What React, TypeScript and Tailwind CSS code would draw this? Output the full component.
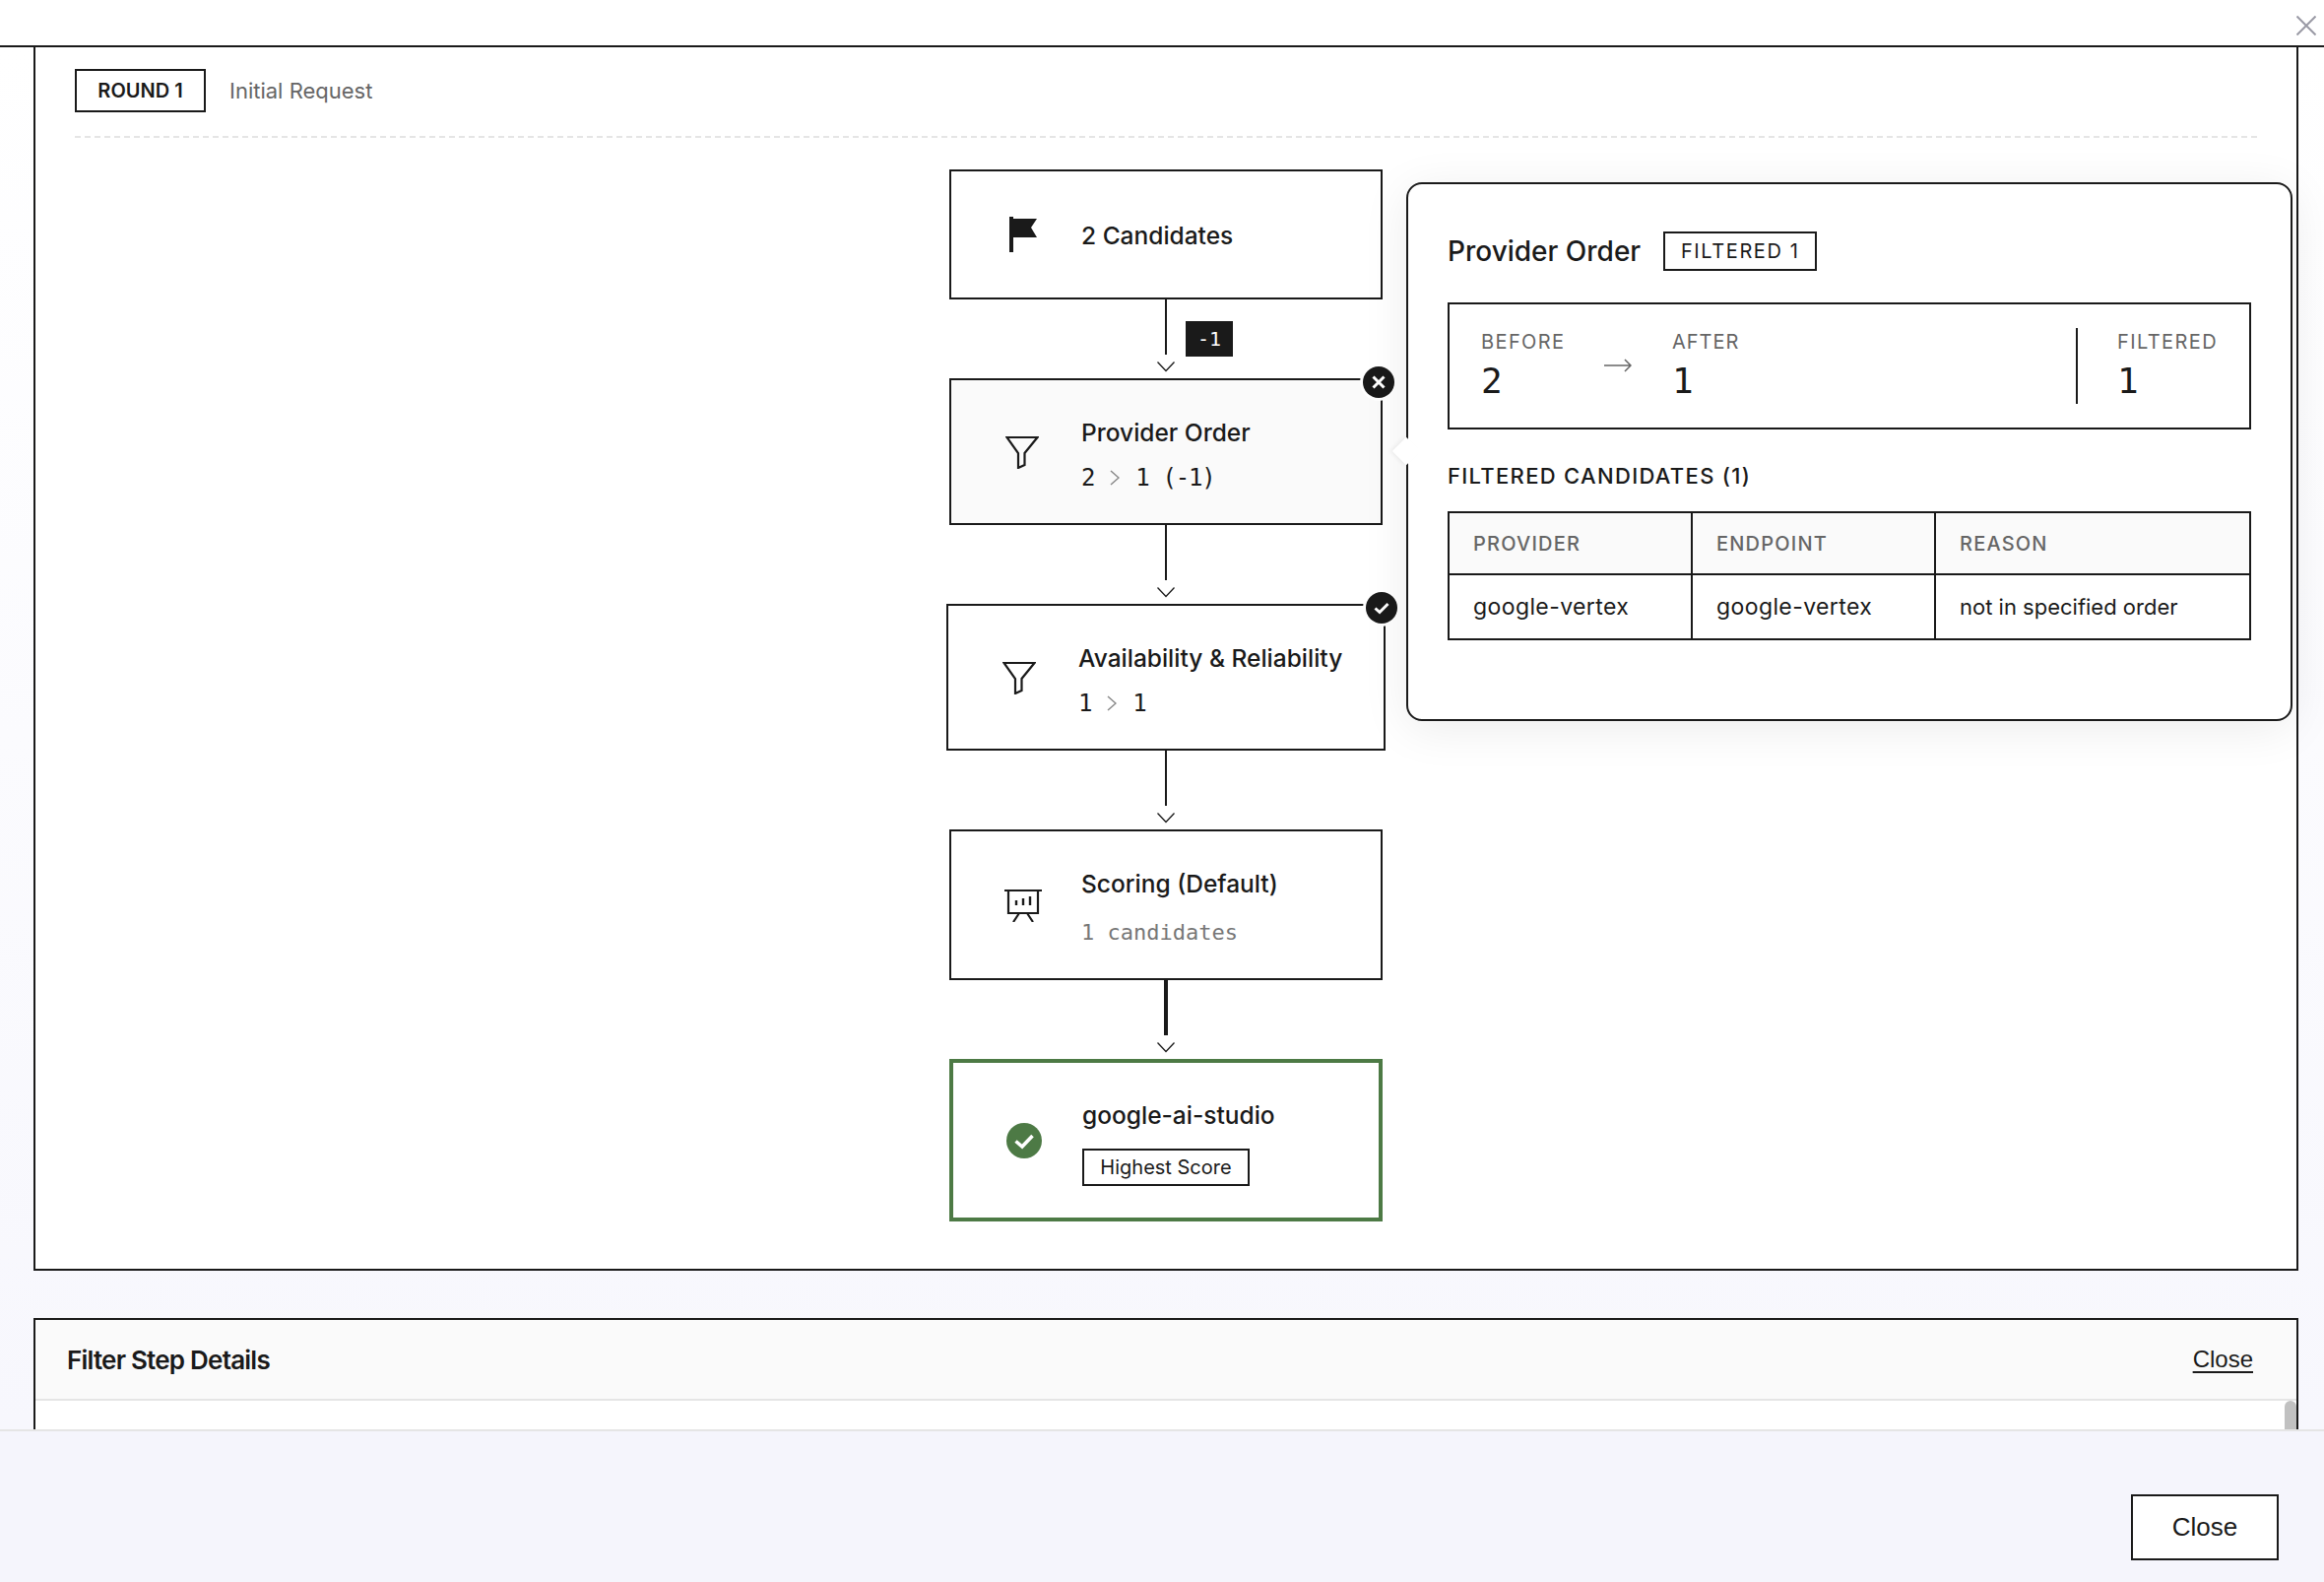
const INK = '#1a1a1a';

const FlagIcon = () => (
  <svg width="30" height="38" viewBox="0 0 30 38" className="-ml-[2px] text-[#1a1a1a]">
    <rect x="2" y="1" width="4" height="36" fill="currentColor" />
    <path d="M6 3 L30 3 L24 12 L30 22 L6 22 Z" fill="currentColor" />
  </svg>
);

const FunnelIcon = () => (
  <svg width="34" height="34" viewBox="0 0 34 34" fill="none" stroke={INK} strokeWidth="2.2" className="-ml-[2px] mt-[1px]">
    <path d="M1.5 2 L32.5 2 L19.5 18 L19.5 30 L13 33 L13 18 Z" />
  </svg>
);

const ScoreIcon = () => (
  <svg width="38" height="34" viewBox="0 0 38 34" fill="none" stroke={INK} strokeWidth="2.2">
    <path d="M0 2 H38 M4 2 V25 H34 V2 M15 25 L9 34 M23 25 L29 34" />
    <path d="M12 17 V12 M19 17 V10 M26 17 V8" strokeWidth="2.4" />
  </svg>
);

const Chevron = () => (
  <svg width="18" height="11" viewBox="0 0 18 11" fill="none" stroke={INK} strokeWidth="1.3" className="mt-[7px]">
    <path d="M0.5 0.5 L9 9.5 L17.5 0.5" />
  </svg>
);

const SmallArrow = () => (
  <svg width="10" height="16" viewBox="0 0 10 16" fill="none" stroke="#888888" strokeWidth="1.5">
    <path d="M1 1 L9 8 L1 15" />
  </svg>
);

const Connector = ({ heavy, tag }: { heavy?: boolean; tag?: string }) => (
  <div className="relative flex h-[80px] flex-col items-center">
    <div className={heavy ? 'h-[56px] w-[4px] bg-[#1a1a1a]' : 'h-[56px] w-[2px] bg-[#1a1a1a]'} />
    <Chevron />
    {tag && (
      <span className="absolute left-[calc(50%+20px)] top-[22px] flex h-[36px] w-[48px] items-center justify-center bg-[#1a1a1a] font-['DejaVu_Sans_Mono',monospace] text-[20px] text-white">
        {tag}
      </span>
    )}
  </div>
);

const StatusDot = ({ kind }: { kind: 'x' | 'check' }) => (
  <span className="absolute right-[-14px] top-[-14px] flex h-[32px] w-[32px] items-center justify-center rounded-full bg-[#1a1a1a] ring-[3px] ring-white">
    <svg width="16" height="16" viewBox="0 0 16 16" fill="none" stroke="white" strokeWidth="3">
      {kind === 'x' ? <path d="M2.5 2.5 L13.5 13.5 M13.5 2.5 L2.5 13.5" /> : <path d="M1.5 8.5 L6 12.5 L14.5 4" />}
    </svg>
  </span>
);

const Flow = ({ a, b, extra }: { a: string; b: string; extra?: string }) => (
  <div className="mt-[11px] flex h-[34px] items-center font-['DejaVu_Sans_Mono',monospace] text-[24px] tracking-[-1.2px] text-[#1a1a1a]">
    <span>{a}</span>
    <span className="mx-[16px]">
      <SmallArrow />
    </span>
    <span>{b}</span>
    {extra && <span className="ml-[14px]">{extra}</span>}
  </div>
);

const App = () => {
  return (
    <div className="flex h-screen w-screen flex-col overflow-hidden bg-[#f7f7fd] font-['Inter',sans-serif] text-[#1a1a1a]">
      <header className="relative h-[48px] shrink-0 border-b-2 border-[#1a1a1a] bg-white">
        <svg width="20" height="20" viewBox="0 0 20 20" fill="none" stroke="#9a9aa5" strokeWidth="2" className="absolute right-[8px] top-[16px]">
          <path d="M0.5 0.5 L19.5 19.5 M19.5 0.5 L0.5 19.5" />
        </svg>
      </header>

      <main className="flex min-h-0 flex-1 flex-col overflow-hidden bg-linear-to-b from-white to-[#f7f7fd] pl-[34px] pr-[26px]">
        <section className="relative shrink-0 border-x-2 border-b-2 border-[#1a1a1a] bg-white px-[40px] pb-[48px] pt-[22px]">
          <div className="flex items-center gap-[24px] border-b-2 border-dashed border-[#e5e5e5] pb-[24px]">
            <span className="flex h-[44px] w-[133px] items-center justify-center border-2 border-[#1a1a1a] text-[20px] font-semibold">
              ROUND 1
            </span>
            <span className="text-[22px] text-[#666666]">Initial Request</span>
          </div>

          <div className="mt-[32px] flex flex-col items-center">
            <div className="flex h-[132px] w-[440px] items-center border-2 border-[#1a1a1a] pl-[46px]">
              <div className="flex w-[54px] justify-center"><FlagIcon /></div>
              <div className="ml-[32px] pt-[1px] text-[24.5px] font-medium leading-[36px]">2 Candidates</div>
            </div>
            <Connector tag="-1" />

            <div className="relative flex h-[149px] w-[440px] items-center border-2 border-[#1a1a1a] bg-[#fafafa] pl-[46px]">
              <div className="flex w-[54px] justify-center"><FunnelIcon /></div>
              <div className="ml-[32px] pt-[5px]">
                <div className="text-[24.5px] font-medium leading-[36px]">Provider Order</div>
                <Flow a="2" b="1" extra="(-1)" />
              </div>
              <StatusDot kind="x" />
            </div>
            <Connector />

            <div className="relative flex h-[149px] w-[446px] items-center border-2 border-[#1a1a1a] pl-[46px]">
              <div className="flex w-[54px] justify-center"><FunnelIcon /></div>
              <div className="ml-[32px] pt-[5px]">
                <div className="whitespace-nowrap text-[24.5px] font-medium leading-[36px]">Availability &amp; Reliability</div>
                <Flow a="1" b="1" />
              </div>
              <StatusDot kind="check" />
            </div>
            <Connector />

            <div className="flex h-[153px] w-[440px] items-center border-2 border-[#1a1a1a] pl-[46px]">
              <div className="flex w-[54px] justify-center"><ScoreIcon /></div>
              <div className="ml-[32px] pt-[5px]">
                <div className="text-[24.5px] font-medium leading-[36px]">Scoring (Default)</div>
                <div className="mt-[15px] h-[34px] font-['DejaVu_Sans_Mono',monospace] text-[22px] leading-[34px] text-[#777777]">1 candidates</div>
              </div>
            </div>
            <Connector heavy />

            <div className="flex h-[165px] w-[440px] items-center border-4 border-[#4d7a45] pl-[45px]">
              <div className="flex w-[54px] justify-center">
                <svg width="36" height="36" viewBox="0 0 36 36">
                  <circle cx="18" cy="18" r="18" fill="#4d7a45" />
                  <path d="M9.5 18.5 L16 24 L26.5 13" fill="none" stroke="white" strokeWidth="3.6" />
                </svg>
              </div>
              <div className="ml-[32px] pt-[2px]">
                <div className="text-[24.5px] font-medium leading-[36px]">google-ai-studio</div>
                <span className="mt-[16px] flex h-[38px] w-[170px] items-center justify-center border-2 border-[#1a1a1a] text-[20px]">Highest Score</span>
              </div>
            </div>
          </div>

          <div className="absolute left-[1392px] top-[137px] z-10 h-[547px] w-[900px] rounded-[16px] border-2 border-[#1a1a1a] bg-white px-[40px] pt-[48px] shadow-[0_8px_48px_rgba(0,0,0,0.08)]">
            <div className="absolute left-[-12px] top-[261px] h-[20px] w-[20px] rotate-45 bg-white shadow-[-2px_2px_4px_rgba(0,0,0,0.05)]" />
            <div className="flex h-[40px] items-center gap-[23px]">
              <span className="text-[28px] font-medium">Provider Order</span>
              <span className="flex h-[40px] w-[156px] items-center justify-center border-2 border-[#1a1a1a] text-[20px] tracking-[0.08em]">FILTERED 1</span>
            </div>

            <div className="mt-[32px] flex h-[129px] items-stretch border-2 border-[#1a1a1a] px-[32px] py-[24px]">
              <div className="w-[84px]">
                <div className="text-[20px] leading-[28px] tracking-[0.07em] text-[#666666]">BEFORE</div>
                <div className="mt-[2px] font-['DejaVu_Sans_Mono',monospace] text-[36px] leading-[48px]">2</div>
              </div>
              <svg width="28" height="14" viewBox="0 0 28 14" fill="none" stroke="#666666" strokeWidth="1.5" className="ml-[41px] mt-[31px]">
                <path d="M0 7 H27 M21 1 L27 7 L21 13" />
              </svg>
              <div className="ml-[41px] flex-1">
                <div className="text-[20px] leading-[28px] tracking-[0.05em] text-[#666666]">AFTER</div>
                <div className="mt-[2px] font-['DejaVu_Sans_Mono',monospace] text-[36px] leading-[48px]">1</div>
              </div>
              <div className="w-[2px] bg-[#1a1a1a]" />
              <div className="ml-[40px]">
                <div className="text-[20px] leading-[28px] tracking-[0.07em] text-[#666666]">FILTERED</div>
                <div className="mt-[2px] font-['DejaVu_Sans_Mono',monospace] text-[36px] leading-[48px]">1</div>
              </div>
            </div>

            <div className="mt-[30px] text-[22px] font-medium leading-[34px] tracking-[0.06em]">FILTERED CANDIDATES (1)</div>

            <table className="mt-[19px] w-full table-fixed border-collapse border-2 border-[#1a1a1a] text-[22px]">
              <colgroup>
                <col className="w-[247px]" />
                <col className="w-[247px]" />
                <col />
              </colgroup>
              <thead>
                <tr className="h-[63px] bg-[#fafafa] text-[20px] font-medium tracking-[0.06em] text-[#666666]">
                  <th className="border-2 border-[#1a1a1a] px-[24px] text-left font-medium">PROVIDER</th>
                  <th className="border-2 border-[#1a1a1a] px-[24px] text-left font-medium">ENDPOINT</th>
                  <th className="border-2 border-[#1a1a1a] px-[24px] text-left font-medium">REASON</th>
                </tr>
              </thead>
              <tbody>
                <tr className="h-[66px]">
                  <td className="border-2 border-[#1a1a1a] px-[24px] text-[23px] tracking-[0.4px]">google-vertex</td>
                  <td className="border-2 border-[#1a1a1a] px-[24px] text-[23px] tracking-[0.4px]">google-vertex</td>
                  <td className="border-2 border-[#1a1a1a] px-[24px]">not in specified order</td>
                </tr>
              </tbody>
            </table>
          </div>
        </section>

        <section className="relative mt-[48px] h-[200px] shrink-0 border-x-2 border-t-2 border-[#1a1a1a] bg-white">
          <div className="flex h-[82px] items-center justify-between border-b-2 border-[#e5e5e5] bg-[#fafafa] pl-[32px] pr-[44px]">
            <h2 className="text-[26px] font-semibold tracking-[-0.03em]">Filter Step Details</h2>
            <button className="font-['Liberation_Sans',sans-serif] text-[24px] underline underline-offset-4">Close</button>
          </div>
          <div className="absolute right-0 top-[82px] h-[100px] w-[12px] rounded-full bg-[#c1c1c1]" />
        </section>
      </main>

      <footer className="flex h-[155px] shrink-0 items-start justify-end border-t-2 border-[#e5e5e5] bg-[#f5f5fc] pr-[46px] pt-[64px]">
        <button className="h-[67px] w-[150px] border-2 border-[#1a1a1a] bg-white font-['Liberation_Sans',sans-serif] text-[26px]">Close</button>
      </footer>
    </div>
  );
};

export default App;
